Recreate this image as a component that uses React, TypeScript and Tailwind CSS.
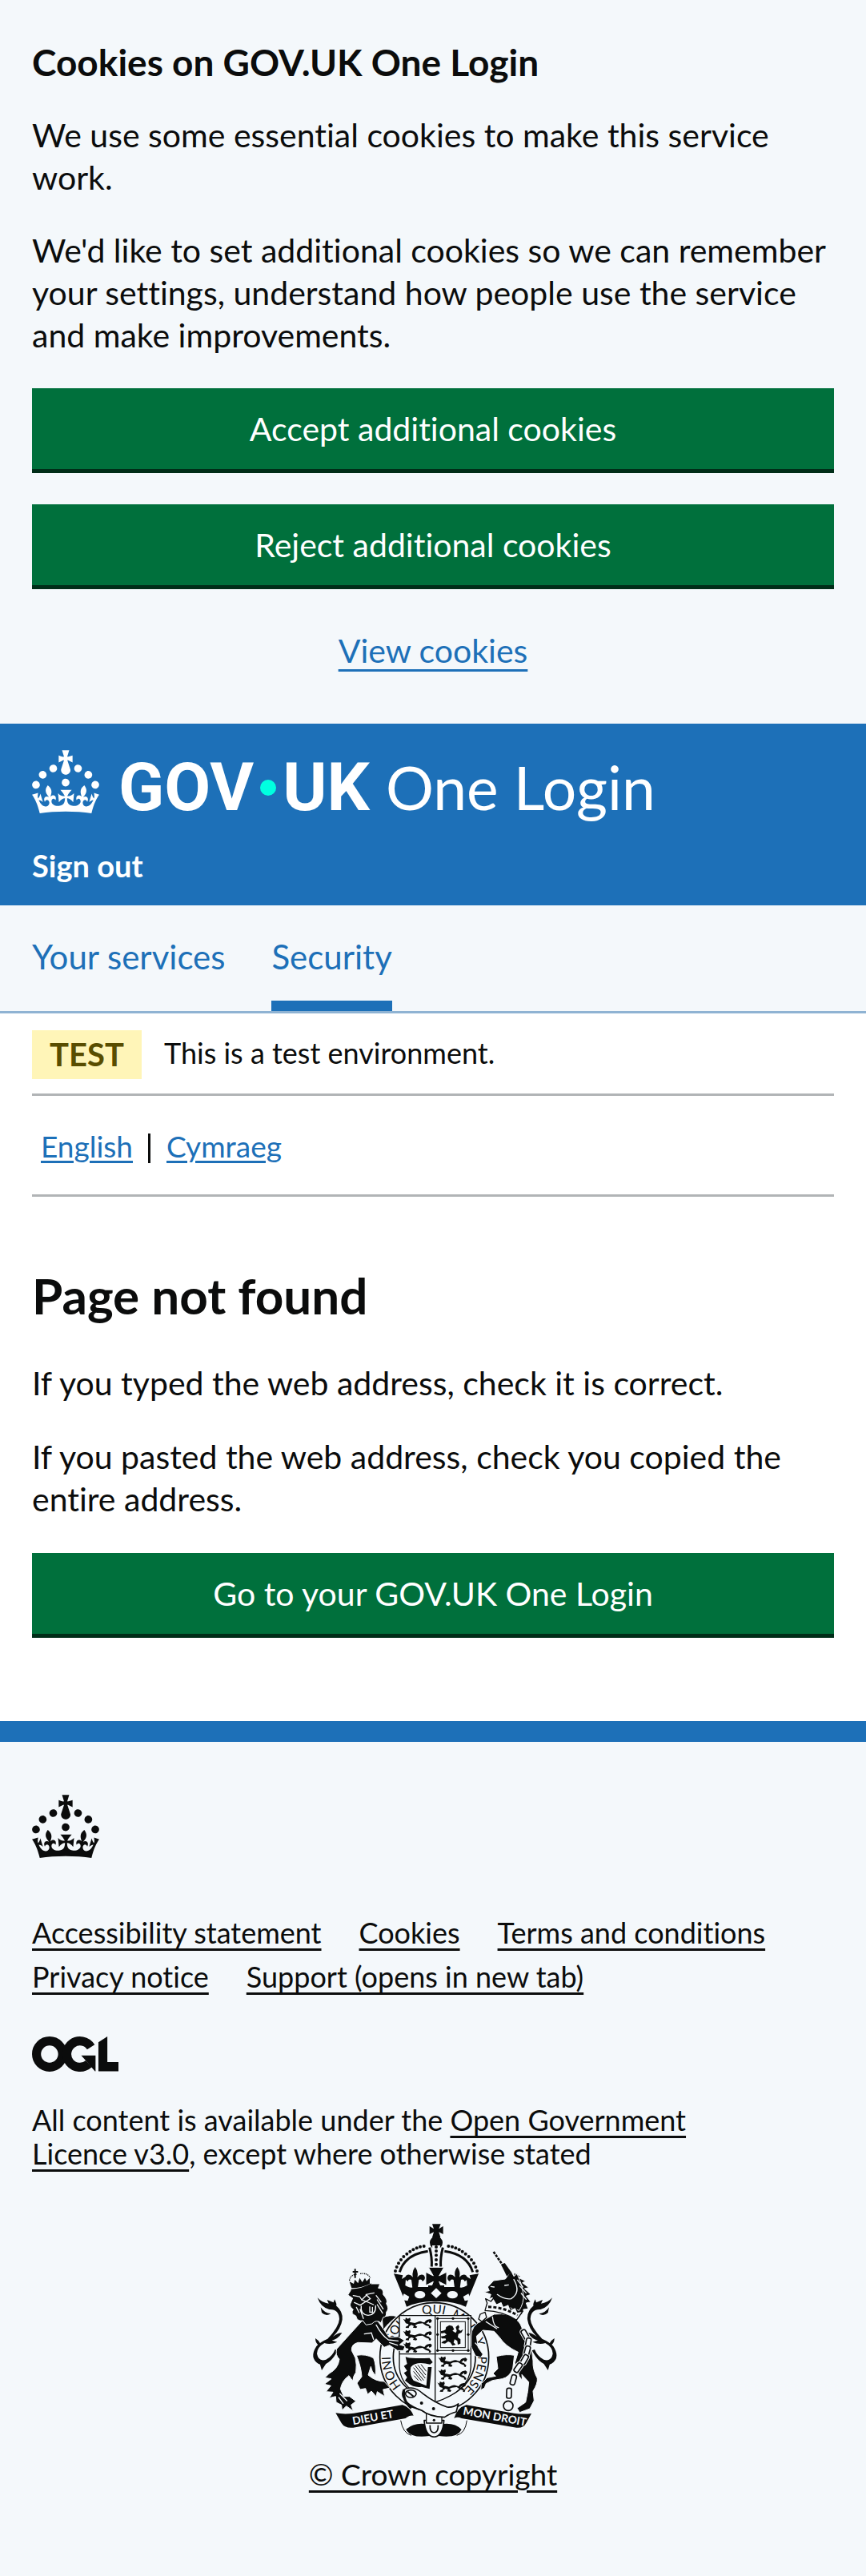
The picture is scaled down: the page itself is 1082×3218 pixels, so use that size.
import type { ReactNode } from "react";

const INK = "#0b0c0c";
const PALE = "#f4f8fb";

function Crown({ label }: { label?: string }) {
  return (
    <svg
      viewBox="0 0 32 30"
      className="h-[79px] w-[84px] shrink-0"
      fill="currentColor"
      role={label ? "img" : undefined}
      aria-label={label}
      aria-hidden={label ? undefined : true}
    >
      <path
        fillRule="evenodd"
        clipRule="evenodd"
        d="M22.6 10.4c-1 .4-2-.1-2.4-1-.4-.9.1-2 1-2.4.9-.4 2 .1 2.4 1s-.1 2-1 2.4m-5.9 6.7c-.9.4-2-.1-2.4-1-.4-.9.1-2 1-2.4.9-.4 2 .1 2.4 1s-.1 2-1 2.4m10.8-3.7c-1 .4-2-.1-2.4-1-.4-.9.1-2 1-2.4.9-.4 2 .1 2.4 1s0 2-1 2.4m3.3 4.8c-1 .4-2-.1-2.4-1-.4-.9.1-2 1-2.4.9-.4 2 .1 2.4 1s-.1 2-1 2.4M17 4.7l2.3 1.2V2.5l-2.3.7-.2-.2.9-3h-3.4l.9 3-.2.2c-.1.1-2.3-.7-2.3-.7v3.4L15 4.7c.1.1.1.2.2.2l-1.3 4c-.1.2-.1.4-.1.6 0 1.1.8 2 1.9 2.2h.7c1-.2 1.9-1.1 1.9-2.1 0-.2 0-.4-.1-.6l-1.3-4c-.1-.2 0-.2.1-.3m-7.6 5.7c.9.4 2-.1 2.4-1 .4-.9-.1-2-1-2.4-.9-.4-2 .1-2.4 1s0 2 1 2.4m-5 3c.9.4 2-.1 2.4-1 .4-.9-.1-2-1-2.4-.9-.4-2 .1-2.4 1s.1 2 1 2.4m-3.2 4.8c.9.4 2-.1 2.4-1 .4-.9-.1-2-1-2.4-.9-.4-2 .1-2.4 1s0 2 1 2.4m14.8 11c4.4 0 8.6.3 12.3.8 1.1-4.5 2.4-7 3.7-8.8l-2.5-.9c.2 1.3.3 1.9 0 2.7-.4-.4-.8-1.1-1.1-2.3l-1.2 4c.7-.5 1.3-.8 2-.9-1.1 2.5-2.6 3.1-3.5 3-1.1-.2-1.7-1.2-1.5-2.1.3-1.2 1.5-1.5 2.1-.1 1.1-2.3-.8-3-2-2.3 1.9-1.9 2.1-3.5.6-5.6-2.1 1.6-2.1 3.2-1.2 5.5-1.2-1.4-3.2-.6-2.5 1.6.9-1.4 2.1-.5 1.9.8-.2 1.1-1.7 2.1-3.5 1.9-2.7-.2-2.9-2.1-2.9-3.6.7-.1 1.9.5 2.9 1.9l.4-4.3c-1.1 1.1-2.1 1.4-3.2 1.4.4-1.2 2.1-3 2.1-3h-5.4s1.7 1.9 2.1 3c-1.1 0-2.1-.2-3.2-1.4l.4 4.3c1-1.4 2.2-2 2.9-1.9-.1 1.5-.2 3.4-2.9 3.6-1.9.2-3.4-.8-3.5-1.9-.2-1.3 1-2.2 1.9-.8.7-2.3-1.2-3-2.5-1.6.9-2.2.9-3.9-1.2-5.5-1.5 2-1.3 3.7.6 5.6-1.2-.7-3.1 0-2 2.3.6-1.4 1.8-1.1 2.1.1.2.9-.3 1.9-1.5 2.1-.9.2-2.4-.5-3.5-3 .6 0 1.2.3 2 .9l-1.2-4c-.3 1.1-.7 1.9-1.1 2.3-.3-.8-.2-1.4 0-2.7l-2.9.9C1.3 23 2.6 25.5 3.7 30c3.7-.5 7.9-.8 12.3-.8"
      />
    </svg>
  );
}

/* Open Government Licence mark: ring, open ring with an arrow, and a corner block. */
function LicenceMark() {
  return (
    <svg viewBox="0 0 483 196" className="h-11 w-[108px]" role="img" aria-label="Open Government Licence">
      <g fill="none" stroke={INK} strokeWidth="50">
        <circle cx="98" cy="98" r="73" />
        <path d="M329 59A73 73 0 1 0 317 152" />
      </g>
      <path fill={INK} d="M299 133l-24-27h80v88h-3l-30-34zM371 32L421 0v143h62v51H371z" />
    </svg>
  );
}

/* A lion passant, about 112 by 40 units, used in the English quarters of the shield. */
function Passant({ x, y }: { x: number; y: number }) {
  return (
    <g transform={`translate(${x} ${y})`}>
      <path
        fill={INK}
        d="M3 5l8 4 2-8 8 4 8-4 2 8-4 8q14 2 20 4l10-4q10-5 18 0l8 2q4-8 10-10l12-3 6 5-3 8-7 2-2-6-10 8 10 3 9 9-3 6-6-2 1-5-12-4-12-8-18 2-10 5 8 6-4 5-12-2 3-6-9-4-8 5-2 7-12-1 3-6 7-2 1-6-10-3-4-8z"
      />
    </g>
  );
}

function CrestTail() {
  return (
    <g fill={INK}>
      <path d="M156 528Q122 592 84 578Q48 556 76 512Q90 496 118 484Q160 440 162 410Q160 372 124 374Q92 366 80 330Q98 350 122 352L116 338L140 348L144 336Q154 356 150 360Q176 382 173 412Q168 446 138 476Q158 460 172 462Q156 486 134 490L154 496Q128 508 106 500Q78 516 78 540Q84 572 112 562Q136 550 146 524Z" />
      <path d="M92 366Q106 388 130 390Q112 402 96 386ZM84 508Q72 500 72 482Q86 490 92 504ZM88 574L96 602L114 574Z" />
    </g>
  );
}

function CrownHalf() {
  const pearls = [
    [372, 230], [377, 215], [384, 201], [393, 188], [403, 176], [415, 166],
    [427, 157], [439, 150], [452, 144], [465, 139], [479, 137],
  ];
  return (
    <g fill={INK}>
      {pearls.map(([cx, cy]) => (
        <circle key={cx} cx={cx} cy={cy} r="6" />
      ))}
      <path d="M388 234Q408 168 494 156" fill="none" stroke={INK} strokeWidth="9" />
      <path d="M500 142Q510 180 508 214" fill="none" stroke={INK} strokeWidth="9" />
      <path d="M366 240L400 246L396 260L412 250L409 284Q428 296 440 290L525 290V345Q470 340 414 364L398 318Z" />
      <path d="M446 215q14 18 8 38 q14-16 26-6 q8 14-6 22 q-4-10-14-6l-4 30h-20l-4-30q-10-4-14 6 q-14-8-6-22 q12-10 26 6 q-6-20 8-38z" />
      <g fill={PALE}>
        <path d="M404 315L424 326L418 342L394 338Z" />
        <ellipse cx="464" cy="319" rx="20" ry="14" />
      </g>
    </g>
  );
}

function Crest() {
  return (
    <svg viewBox="48 50 930 804" className="h-[268px] w-[310px]" aria-hidden="true">
      <defs>
        <path id="garter" d="M518 717A164 164 0 0 1 518 389A164 164 0 0 1 518 717" />
        <path id="ribbon-left" d="M214 807L410 771" />
        <path id="ribbon-right" d="M624 768L872 813" />
      </defs>

      {/* Garter and its motto */}
      <circle cx="518" cy="553" r="204" fill={PALE} stroke={INK} strokeWidth="5" />
      <circle cx="518" cy="553" r="154" fill="none" stroke={INK} strokeWidth="5" />
      <g fill={INK} fontFamily="Lato, sans-serif" fontSize="46" fontWeight="400">
        <text><textPath href="#garter" startOffset="140">HONI</textPath></text>
        <text><textPath href="#garter" startOffset="314">SOIT</textPath></text>
        <text><textPath href="#garter" startOffset="471">QUI</textPath></text>
        <text><textPath href="#garter" startOffset="580">MAL</textPath></text>
        <text><textPath href="#garter" startOffset="704">Y</textPath></text>
        <text><textPath href="#garter" startOffset="768">PENSE</textPath></text>
      </g>

      {/* Shield */}
      <path d="M387 397H655V590Q650 680 520 722Q392 680 387 590Z" fill={PALE} stroke={INK} strokeWidth="4" />
      <path d="M521 397V720M387 541H655" stroke={INK} strokeWidth="4" />
      <Passant x={398} y={404} />
      <Passant x={398} y={450} />
      <Passant x={398} y={496} />
      <Passant x={530} y={549} />
      <Passant x={530} y={597} />
      <Passant x={526} y={643} />
      <g fill="none" stroke={INK}>
        <rect x="530" y="408" width="115" height="120" strokeWidth="3" />
        <rect x="541" y="420" width="93" height="97" strokeWidth="3" />
      </g>
      <g fill={INK}>
        {[[530, 408], [588, 408], [645, 408], [530, 468], [645, 468], [530, 528], [588, 528], [645, 528]].map(([x, y]) => (
          <circle key={`${x}-${y}`} cx={x} cy={y} r="5" />
        ))}
        <path d="M562 440l12-7 12 3 6 12-6 6 12 8 4-8-4-14 10-8 4 8-4 8 8 6 10-6-6 12-12 6-2 12 10 8 0 16-10 4-2-14-10-6-4 12 8 8-12 4-8-12-8-4-12 8-14-2 6-7 12-4-2-6-14 0-4-8 14-2 8-5-8-6-12 2-2-8 12-3 6-3z" />
        <path d="M410 552Q440 560 500 556L512 572L502 580Q450 566 430 590Q424 620 440 640L488 660L494 590L508 590L500 672L470 664Q440 668 420 650L408 640L416 628L404 612L416 604L404 586L416 578Z" />
      </g>
      <path fill={PALE} d="M438 586Q460 574 490 584L482 650L446 634Q430 612 438 586Z" />
      <path
        d="M440 592L478 640M440 606L470 642M446 584L484 632M456 582L486 620M468 580L488 606M442 622L458 640"
        stroke={INK}
        strokeWidth="3"
      />

      {/* Royal crown */}
      <g>
        <path fill={INK} d="M510 54H542L535 72L551 62V92L535 84L541 104H510L516 84L500 92V62L516 72Z" />
        <circle cx="525" cy="124" r="24" fill={INK} />
        <path fill={PALE} d="M510 134H540L536 218H514Z" />
        <CrownHalf />
        <g transform="translate(1050 0) scale(-1 1)">
          <CrownHalf />
        </g>
        {[140, 155, 171, 188, 205].map((cy) => (
          <circle key={cy} cx="525" cy={cy} r="6" fill={INK} />
        ))}
        <path fill={INK} stroke={PALE} strokeWidth="3" d="M496 216H554L536 248L564 234V284L536 270L545 292H505L514 270L486 284V234L514 248Z" />
        <path fill={INK} d="M495 284H555V300H495Z" />
        <path fill={PALE} d="M525 294L545 313L525 332L505 313Z" />
      </g>

      {/* Lion supporter */}
      <CrestTail />
      <g fill={INK} stroke={PALE} strokeWidth="3" strokeLinejoin="round">
        <path d="M322 405Q350 392 378 400Q340 430 326 452Z" />
        <path d="M226 546Q262 540 290 556Q300 580 298 622Q282 606 280 588L270 620Q298 644 330 644L352 668L326 674L332 700L304 682L300 700L282 680L268 692L260 670L240 674L228 650L246 626Q244 590 226 546Z" />
        <path d="M246 418L152 522Q146 546 162 560Q158 596 124 614L108 630L132 634L106 654L130 660L112 682L138 684L124 706L148 700L150 722L170 732L172 752L188 736L214 754L206 732L224 718L200 700L178 700L166 672Q172 640 198 622L212 642Q214 622 224 610Q228 580 222 556L208 528Q206 504 232 498L284 500L300 484L330 516L350 508L380 528L402 528L408 512L388 506L406 490L382 476L348 478Q330 450 300 410Z" />
        <path d="M194 320L206 300Q250 300 284 278L314 278L308 294Q330 296 326 318Q346 340 338 352Q350 372 338 384Q340 402 326 404L318 424Q300 410 284 428L262 432L250 416Q228 420 224 398Q202 390 214 374Q196 362 206 346L212 332Z" />
      </g>
      <g fill="none" stroke={PALE} strokeWidth="4" strokeLinecap="round">
        <path d="M214 322L238 326L246 338M262 318L292 312M246 338L264 320L278 334L262 344ZM218 348L240 358L262 344L290 356M244 362Q240 392 270 396Q300 394 298 360M276 364V384H286V366M300 322L318 346M304 338L326 372M304 356L324 388M226 366L236 386M240 374L252 408" />
        <path d="M256 466L282 462L290 486M300 432Q320 470 346 488M346 488L382 492M350 498L380 508M218 530Q230 560 232 600M164 690L190 716M160 704L176 726" />
      </g>
      <g>
        <path d="M206 298Q244 298 282 276L280 288Q246 308 208 310Z" fill={INK} />
        <path d="M208 294L200 270L216 278L220 262L232 276L238 256L248 272L258 256L264 268L276 256L276 278Q246 294 208 294Z" fill={INK} />
        <path d="M200 266Q202 244 228 242M240 240Q268 236 278 256" fill="none" stroke={INK} strokeWidth="4" strokeDasharray="4 3" />
        <path d="M221 222V256M212 233H232" stroke={INK} strokeWidth="6" />
      </g>

      {/* Unicorn supporter */}
      <g transform="translate(1040 0) scale(-1 1)">
        <CrestTail />
      </g>
      <g fill={INK} stroke={PALE} strokeWidth="3" strokeLinejoin="round">
        <path d="M738 614L756 596L750 550Q790 540 818 546L812 596Q800 628 772 634L736 640L712 652L706 668L692 676L694 652L716 630L748 624Z" />
        <path d="M656 476Q656 430 700 416L742 392Q800 384 834 420Q850 440 850 470Q884 500 888 566Q886 600 904 632Q906 652 888 680L892 716L876 746L838 760L828 744L860 722L868 682L872 646L846 618L848 640L836 624L820 574L832 534Q784 512 762 478L742 456L700 452L676 474L682 516L700 542L692 554L672 548L656 514Z" />
        <path d="M816 236L842 250L832 254L860 268L848 274L872 292L856 296L880 318L862 324L880 346L862 350L870 372L852 374L846 394L820 380Z" />
        <path d="M718 290L740 266L784 260L806 230L816 250L828 240Q848 280 852 318Q854 350 836 378L744 350L736 330L724 334L730 318L704 308L724 304Z" />
      </g>
      <g fill="none" stroke={PALE} strokeWidth="4" strokeLinecap="round">
        <path d="M730 288L742 290M782 284L796 282M816 262Q844 310 806 334Q780 338 754 318M830 264L850 290M838 286L862 312M844 314L862 336M712 420L752 446M736 402Q740 440 758 442M672 500L690 520" />
      </g>
      <path d="M740 158L798 242" stroke={INK} strokeWidth="8" strokeDasharray="10 4" />
      <path fill={INK} d="M768 206L782 200L806 234L790 250Z" />
      <path fill={PALE} stroke={INK} strokeWidth="4" strokeLinejoin="round" d="M708 378L716 350L710 334L730 344L740 332L752 352L770 344L778 362L796 354L804 374L822 366L830 384L850 380L826 414Q776 380 708 378Z" />
      <path d="M720 364Q780 366 830 396" fill="none" stroke={INK} strokeWidth="9" strokeDasharray="12 7" />
      <g fill={PALE} stroke={INK} strokeWidth="4">
        <path d="M690 392L708 384L714 404L696 420L684 410Z" />
      </g>
      {[
        [858, 468, 60], [870, 500, 100], [866, 530, 105], [856, 562, 120], [832, 592, 125],
        [814, 638, 105], [798, 688, 92],
      ].map(([x, y, r]) => (
        <g key={y} transform={`translate(${x} ${y}) rotate(${r})`}>
          <rect x="-19" y="-9" width="38" height="18" rx="7" fill="none" stroke={PALE} strokeWidth="11" />
          <rect x="-19" y="-9" width="38" height="18" rx="7" fill={PALE} stroke={INK} strokeWidth="5" />
        </g>
      ))}
      <circle cx="795" cy="735" r="18" fill={PALE} stroke={INK} strokeWidth="5" />

      {/* Ribbon, strap and buckle */}
      <g fill={INK}>
        <path d="M148 762Q180 768 216 763L398 732Q430 742 440 772Q424 770 410 782L214 817Q182 820 170 800Z" />
        <path d="M882 764Q850 768 816 763L638 732Q604 742 592 782Q604 774 620 782L826 817Q852 820 862 800Z" />
        <path d="M412 824Q440 796 492 804L500 848Q430 858 412 824ZM620 824Q594 796 542 804L534 848Q604 858 620 824Z" />
      </g>
      <path d="M392 790Q400 838 432 846M640 790Q634 838 602 846" fill="none" stroke={INK} strokeWidth="3" />
      <g fill={PALE} stroke={INK} strokeLinejoin="round">
        <path strokeWidth="5" d="M480 790Q484 850 517 852Q550 850 554 790Z" />
        <path strokeWidth="4" d="M488 756H546V800H488Z" />
        <path strokeWidth="5" d="M400 700Q392 668 430 668Q452 668 476 690Q520 724 566 740Q590 742 608 728L600 758Q580 762 556 778Q500 776 470 752Q430 738 408 716Z" />
        <ellipse cx="430" cy="690" rx="20" ry="14" strokeWidth="5" />
      </g>
      <path d="M404 674Q400 720 432 744" fill="none" stroke={INK} strokeWidth="9" />
      <path d="M502 808Q500 834 517 836Q534 834 532 808" fill="none" stroke={INK} strokeWidth="5" />
      <path d="M418 682L440 700" stroke={INK} strokeWidth="6" />
      <g fill={INK}>
        <circle cx="470" cy="725" r="6" />
        <circle cx="515" cy="746" r="6" />
        <circle cx="517" cy="789" r="5" />
      </g>
      <g fill={PALE} fontFamily="Lato, sans-serif" fontSize="41" fontWeight="700">
        <text><textPath href="#ribbon-left">DIEU ET</textPath></text>
        <text><textPath href="#ribbon-right">MON DROIT</textPath></text>
      </g>
    </svg>
  );
}

const BUTTON =
  "block w-full border-b-5 border-[#002d18] bg-[#00703c] px-6 py-6 text-center text-[41px] leading-[53px] text-white";

const LINK = "underline decoration-3 underline-offset-6";

function FooterLink({ children }: { children: ReactNode }) {
  return (
    <li>
      <a href="#" className={LINK}>
        {children}
      </a>
    </li>
  );
}

export default function App() {
  return (
    <div className="bg-white font-['Lato',sans-serif] text-[41px] leading-[53px] text-[#0b0c0c] [font-variant-ligatures:none]">
      <section aria-labelledby="cookie-title" className="bg-[#f4f8fb] px-10 pt-[51px] pb-[65px]">
        <h2 id="cookie-title" className="text-[46px] font-bold">
          Cookies on GOV.UK One Login
        </h2>
        <p className="mt-[38px]">We use some essential cookies to make this service work.</p>
        <p className="mt-[38px]">
          We'd like to set additional cookies so we can remember your settings, understand how people use the service
          and make improvements.
        </p>
        <div className="mt-10 flex flex-col gap-[39px]">
          <button type="button" className={BUTTON}>
            Accept additional cookies
          </button>
          <button type="button" className={BUTTON}>
            Reject additional cookies
          </button>
        </div>
        <p className="mt-[50px] text-center">
          <a href="#" className="text-[#1d70b8] underline decoration-3 underline-offset-8">
            View cookies
          </a>
        </p>
      </section>

      <header>
        <div className="bg-[#1d70b8] px-10 pt-[33px] pb-[29px] text-white">
          <a href="#" className="flex items-start" aria-label="GOV.UK One Login">
            <Crown />
            <span className="ml-6 flex items-baseline leading-[92px]">
              <span className="font-['Roboto',sans-serif] text-[84px] font-bold">GOV</span>
              <span className="mx-2 size-5 -translate-y-[18px] rounded-full bg-[#00ffe0]" />
              <span className="font-['Roboto',sans-serif] text-[84px] font-bold">UK</span>
              <span className="ml-5 text-[75px]">One Login</span>
            </span>
          </a>
          <p className="mt-[30px] text-[38px] leading-[42px] font-bold">
            <a href="#">Sign out</a>
          </p>
        </div>
        <nav aria-label="Account" className="border-b-3 border-[#8fb3d3] bg-[#f4f8fb] px-10 text-[42px] text-[#1d70b8]">
          <ul className="flex gap-[58px]">
            <li className="border-b-13 border-transparent pt-[38px] pb-7">
              <a href="#">Your services</a>
            </li>
            <li className="border-b-13 border-[#1d70b8] pt-[38px] pb-7">
              <a href="#" aria-current="page">
                Security
              </a>
            </li>
          </ul>
        </nav>
      </header>

      <div className="px-10 text-[37px] leading-[42px]">
        <div className="flex items-start gap-7 border-b-3 border-[#b1b4b6] pt-[21px] pb-[18px]">
          <strong className="bg-[#fff5b8] px-[22px] text-[40px] leading-[61px] font-bold text-[#594d00]">TEST</strong>
          <p className="text-[36px] leading-14">This is a test environment.</p>
        </div>
        <nav aria-label="Language" className="border-b-3 border-[#b1b4b6] pt-[42px] pb-[39px]">
          <ul className="flex">
            <li className="px-[11px]">
              <a href="#" className="text-[#1d70b8] underline decoration-3 underline-offset-4">
                English
              </a>
            </li>
            <li className="ml-2 flex items-center">
              <span className="mt-1 h-[37px] w-[3px] bg-[#0b0c0c]" />
              <a href="#" className="ml-5 text-[#1d70b8] underline decoration-3 underline-offset-4">
                Cymraeg
              </a>
            </li>
          </ul>
        </nav>
      </div>

      <main className="px-10 pt-[90px] pb-[104px]">
        <h1 className="text-[62px] leading-[66px] font-bold">Page not found</h1>
        <p className="mt-[50px]">If you typed the web address, check it is correct.</p>
        <p className="mt-[39px]">If you pasted the web address, check you copied the entire address.</p>
        <a href="#" className={`mt-[41px] ${BUTTON}`}>
          Go to your GOV.UK One Login
        </a>
      </main>

      <footer className="border-t-26 border-[#1d70b8] bg-[#f4f8fb] px-10 pt-[66px] pb-[106px] text-[36px] leading-[42px]">
        <Crown label="Crown" />
        <ul className="mt-[72px] flex flex-wrap gap-x-[47px] gap-y-[13px]">
          <FooterLink>Accessibility statement</FooterLink>
          <FooterLink>Cookies</FooterLink>
          <FooterLink>Terms and conditions</FooterLink>
          <FooterLink>Privacy notice</FooterLink>
          <FooterLink>Support (opens in new tab)</FooterLink>
        </ul>
        <div className="mt-[54px]">
          <LicenceMark />
        </div>
        <p className="mt-[39px] max-w-[880px]">
          All content is available under the{" "}
          <a href="#" className={LINK}>
            Open Government Licence v3.0
          </a>
          , except where otherwise stated
        </p>
        <div className="mt-[66px] flex flex-col items-center gap-[25px]">
          <Crest />
          <a href="#" className={`text-[37px] ${LINK}`}>
            © Crown copyright
          </a>
        </div>
      </footer>
    </div>
  );
}
